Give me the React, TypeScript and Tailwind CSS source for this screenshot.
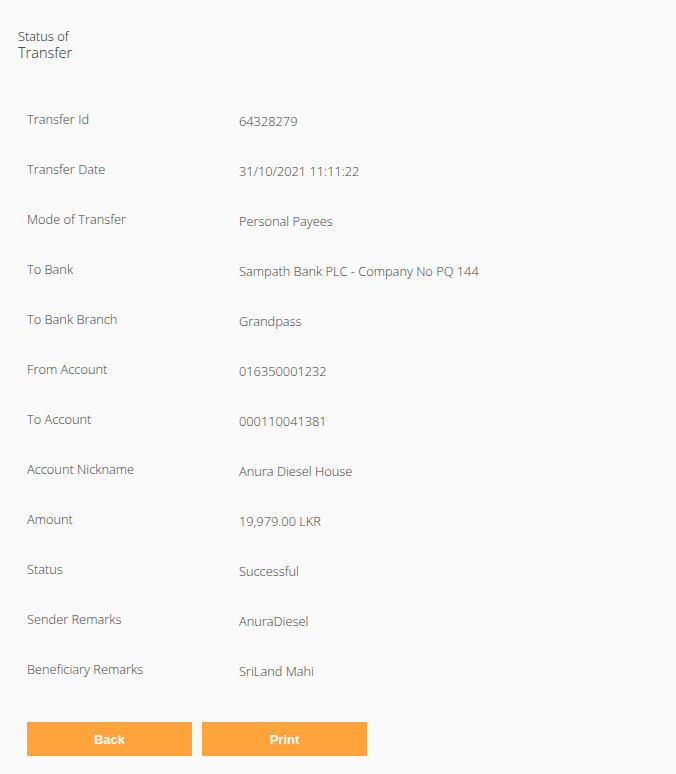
import React from "react";

const rows: [string, string][] = [
  ["Transfer Id", "64328279"],
  ["Transfer Date", "31/10/2021 11:11:22"],
  ["Mode of Transfer", "Personal Payees"],
  ["To Bank", "Sampath Bank PLC - Company No PQ 144"],
  ["To Bank Branch", "Grandpass"],
  ["From Account", "016350001232"],
  ["To Account", "000110041381"],
  ["Account Nickname", "Anura Diesel House"],
  ["Amount", "19,979.00 LKR"],
  ["Status", "Successful"],
  ["Sender Remarks", "AnuraDiesel"],
  ["Beneficiary Remarks", "SriLand Mahi"],
];

export default function App() {
  return (
    <div
      className="w-[676px] h-[774px] bg-[#fafafa] text-[#4a4a4a] px-[18px] pt-[28px]"
      style={{ fontFamily: "'Open Sans', 'Noto Sans', sans-serif" }}
    >
      <div className="flex flex-col">
        <div className="text-[12.8px] leading-[16px] font-light text-[#222]">Status of</div>
        <div className="text-[14.5px] leading-[18px] font-light text-[#333]">Transfer</div>
      </div>
      <div className="mt-[34px] pl-[9px]">
        {rows.map(([label, value]) => (
          <div key={label} className="flex items-center h-[50px] text-[12.8px]">
            <div className="w-[212px] font-light text-[#444] -translate-y-[1px]">{label}</div>
            <div className="font-light text-[#444] translate-y-[1px]">{value}</div>
          </div>
        ))}
        <div className="flex gap-[10px] mt-[26px]">
          <button
            className="w-[165px] h-[34px] bg-[#ffa43a] text-white font-bold text-[13px] pt-[1px]"
            style={{ fontFamily: "'Liberation Sans', Arial, sans-serif" }}
          >
            Back
          </button>
          <button
            className="w-[165px] h-[34px] bg-[#ffa43a] text-white font-bold text-[13px] pt-[1px]"
            style={{ fontFamily: "'Liberation Sans', Arial, sans-serif" }}
          >
            Print
          </button>
        </div>
      </div>
    </div>
  );
}
